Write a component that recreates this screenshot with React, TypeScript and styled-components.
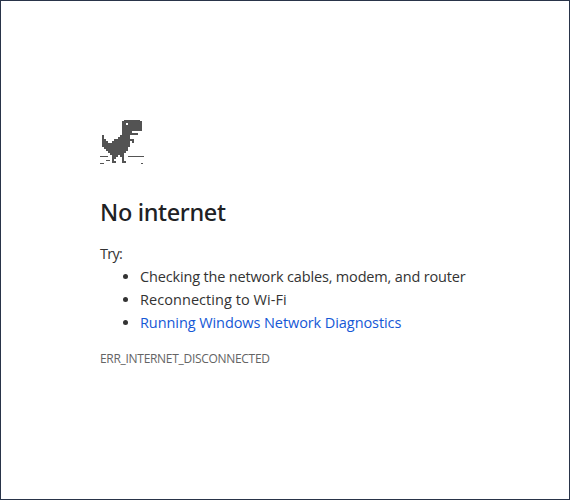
import React from 'react';
import styled, { createGlobalStyle } from 'styled-components';

const GlobalStyle = createGlobalStyle`
  * { box-sizing: border-box; }
  html, body { margin: 0; background: #fff; }
`;

const Page = styled.main`
  width: 570px;
  height: 500px;
  overflow: hidden;
  border: 1px solid #293449;
  padding: 119px 99px 0;
  background: #fff;
  color: #333;
  font: 14.5px/23px "Open Sans", sans-serif;
  white-space: nowrap;
`;

const Dinosaur = styled.svg`
  display: block;
  width: 45px;
  height: 44px;
`;

const Title = styled.h1`
  margin: 33px 0 14px;
  color: #202124;
  font: 500 23.5px/31px "Noto Sans", sans-serif;
  letter-spacing: -0.35px;
`;

const Intro = styled.div`
  letter-spacing: -0.7px;
`;

const Suggestions = styled.ul`
  margin: 0;
  padding: 0 0 0 40px;
`;

const Suggestion = styled.li<{ $tracking: number }>`
  letter-spacing: ${({ $tracking }) => $tracking}px;
`;

const Link = styled.a`
  color: #1558d6;
`;

const ErrorCode = styled.div`
  margin-top: 13px;
  color: #646464;
  font-size: 12px;
  letter-spacing: -0.3px;
`;

const rows = [
  '...........########.',
  '..........##########',
  '..........##.#######',
  '..........##########',
  '..........##########',
  '..........##########',
  '..........#####.....',
  '..........########..',
  '#........#####......',
  '#.......######......',
  '##....##########....',
  '###..#########.#....',
  '##############......',
  '##############......',
  '.############.......',
  '..###########.......',
  '...#########........',
  '....#######.........',
  '.....###.##.........',
  '.....##...#.........',
  '.....#....#.........',
  '.....##...##........',
];

export default function App() {
  return (
    <>
      <GlobalStyle />
      <Page>
        <Dinosaur viewBox="0 0 45 44" fill="#535353" shapeRendering="crispEdges" aria-label="Dinosaur">
          {rows.flatMap((row, y) =>
            [...row].map((cell, x) => cell === '#' ? (
              <rect key={`${x}-${y}`} x={2 + x * 2} y={y * 2 - 1} width="2" height="2" />
            ) : null),
          )}
          <path d="M0 36h8v1H0zM28 36h16v1H28zM6 40h4v1H6zM0 43h4v1H0zM41 43h2v1h-2z" />
        </Dinosaur>
        <Title>No internet</Title>
        <Intro>Try:</Intro>
        <Suggestions>
          <Suggestion $tracking={-0.16}>Checking the network cables, modem, and router</Suggestion>
          <Suggestion $tracking={0.06}>Reconnecting to Wi-Fi</Suggestion>
          <Suggestion $tracking={-0.08}><Link>Running Windows Network Diagnostics</Link></Suggestion>
        </Suggestions>
        <ErrorCode>ERR_INTERNET_DISCONNECTED</ErrorCode>
      </Page>
    </>
  );
}
